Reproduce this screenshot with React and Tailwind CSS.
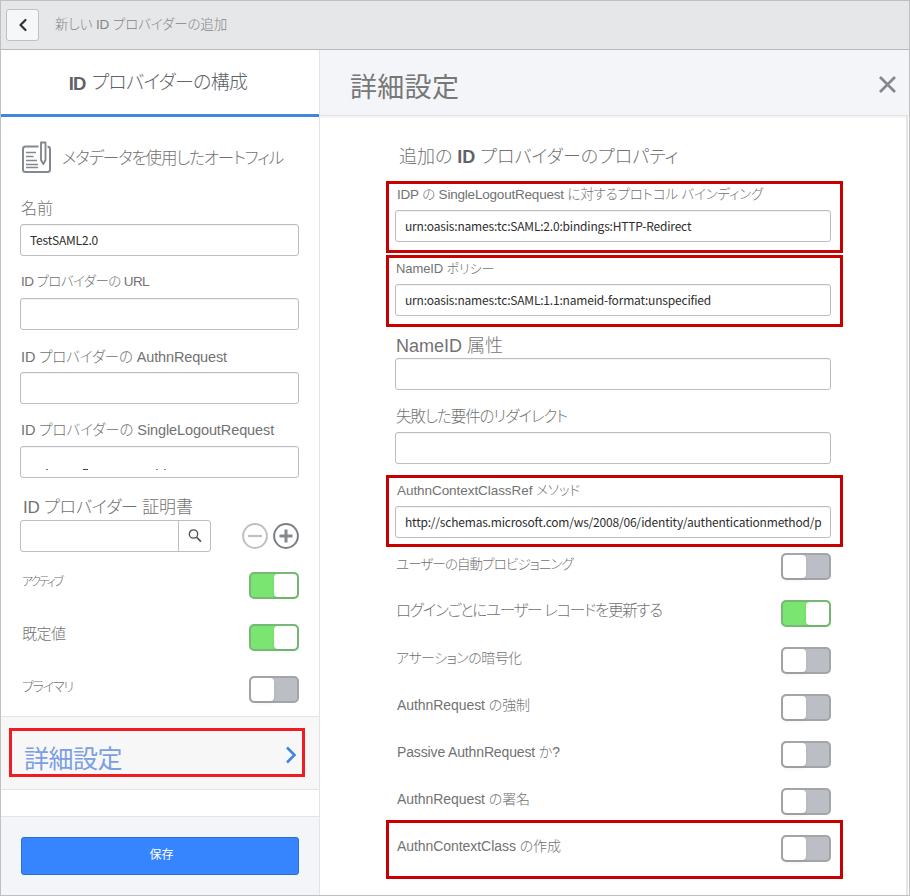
import { ChevronLeft } from "lucide-react";

const inputText = "font-['Noto_Sans_CJK_JP',sans-serif] font-normal text-[#2e2e2e]";

function Label({ className = "", children }) {
  return (
    <div className={`h-5 whitespace-nowrap leading-[22px] text-[#727272] ${className}`}>{children}</div>
  );
}

function Field({ value = "", className = "", children }) {
  return (
    <div
      className={`flex h-8 shrink-0 items-center overflow-hidden whitespace-nowrap rounded-[3px] border border-[#bcbdc0] bg-white px-[9px] shadow-[inset_0_1px_1px_rgba(0,0,0,0.05)] ${inputText} ${className}`}
    >
      {value}
      {children}
    </div>
  );
}

function Toggle({ on = false }) {
  return (
    <div
      className={`flex h-[27px] w-[50px] shrink-0 rounded-[5px] border-2 ${
        on ? "justify-end border-[#76b974] bg-[#7be571]" : "justify-start border-[#a3a5a8] bg-[#bbbec4]"
      }`}
    >
      <div className="h-full w-[23px] rounded-[4px] bg-white shadow-[0_3px_4px_rgba(0,0,0,0.05)]" />
    </div>
  );
}

function DocumentIcon() {
  return (
    <svg width="30" height="34" viewBox="0 0 30 34" fill="none" stroke="#85888e" strokeWidth="2" className="shrink-0">
      <path d="M17.500 6.500H4.500Q2 6.500 2 9V29.500Q2 32 4.500 32H26.500Q29 32 29 29.500V9Q29 7 26.500 6.600" />
      <path d="M5 12.500H15M5 16.500H12.500M5 20.500H16M5 24.500H17M5 27.500H17" strokeWidth="1.700" />
      <path d="M20 2.500H24.500V20L22.300 24L20 20Z" strokeWidth="1.900" strokeLinejoin="round" />
    </svg>
  );
}

function SearchIcon() {
  return (
    <svg width="14" height="14" viewBox="0 0 14 14" fill="none" stroke="#4b4e52">
      <circle cx="5.500" cy="5" r="4.200" strokeWidth="1.300" />
      <path d="M8.600 8.200L13 12.600" strokeWidth="1.600" />
    </svg>
  );
}

function RoundIcon({ plus = false }) {
  return (
    <svg width="26" height="26" viewBox="0 0 26 26" fill="none">
      <circle cx="13" cy="13" r="11.900" stroke={plus ? "#7b7e84" : "#bfc0c3"} strokeWidth="2" />
      <path
        d={plus ? "M6.500 13H19.500M13 6.500V19.500" : "M6 13H20"}
        stroke={plus ? "#85888e" : "#bfc0c3"}
        strokeWidth={plus ? 3 : 2.2}
      />
    </svg>
  );
}

function ToggleRow({ label, on, className = "", labelClass = "" }) {
  return (
    <div className={`flex shrink-0 items-start justify-between ${className}`}>
      <Label className={labelClass}>{label}</Label>
      <Toggle on={on} />
    </div>
  );
}

function Sidebar() {
  return (
    <aside className="flex w-[318px] shrink-0 flex-col bg-white">
      <div className="flex h-[67px] shrink-0 items-center justify-center gap-[6px] whitespace-nowrap border-b-[3px] border-[#4285e0] pr-1 pt-[3px] text-[19px] text-[#5f6368]">
        <span className="text-[18.5px] font-bold tracking-[-0.8px]">ID</span>
        <span className="tracking-[-0.75px]">プロバイダーの構成</span>
      </div>

      <div className="flex h-[75px] shrink-0 items-center gap-[11px] pl-5 pt-[4px]">
        <DocumentIcon />
        <Label className="text-[16.5px] tracking-[-1.1px]">メタデータを使用したオートフィル</Label>
      </div>

      <div className="flex shrink-0 flex-col pl-[19px] pr-5">
        <div className="h-8 pl-px pt-[6px]">
          <Label className="text-[16px]">名前</Label>
        </div>
        <Field value="TestSAML2.0" className="text-[12px] tracking-[-0.2px]" />
        <div className="h-[42px] pl-px pt-[15px]">
          <Label className="text-[13.5px] tracking-[-0.6px]">ID プロバイダーの URL</Label>
        </div>
        <Field />
        <div className="h-[42px] pl-px pt-4">
          <Label className="text-[14.5px] tracking-[-0.15px]">ID プロバイダーの AuthnRequest</Label>
        </div>
        <Field />
        <div className="h-[42px] pl-px pt-[15px]">
          <Label className="text-[14.5px] tracking-[-0.1px]">ID プロバイダーの SingleLogoutRequest</Label>
        </div>
        <Field>
          <div className="mt-[15px] flex h-px pl-4">
            <i className="h-px w-[2px] bg-[#777]" />
            <i className="ml-[35px] h-px w-[5px] bg-[#444]" />
            <i className="ml-[68px] h-px w-[2px] bg-[#888]" />
            <i className="ml-[6px] h-px w-[2px] bg-[#888]" />
          </div>
        </Field>
        <div className="h-[42px] pl-[3px] pt-[19px]">
          <Label className="text-[17px] tracking-[-0.2px]">ID プロバイダー 証明書</Label>
        </div>
        <div className="flex h-8 items-center justify-between">
          <div className="flex h-8 w-[191px] rounded-[3px] border border-[#bcbdc0]">
            <div className="flex-1" />
            <div className="flex w-8 items-center justify-center border-l border-[#bcbdc0]">
              <SearchIcon />
            </div>
          </div>
          <div className="flex gap-[5px]">
            <RoundIcon />
            <RoundIcon plus />
          </div>
        </div>
      </div>

      <div className="flex h-[164px] shrink-0 flex-col pl-[21px] pr-5 pt-5">
        <ToggleRow label="アクティブ" on className="h-[52px]" labelClass="-mt-px text-[12px] tracking-[-2.3px]" />
        <ToggleRow label="既定値" on className="h-[52px]" labelClass="-mt-px text-[15px] tracking-[-0.5px]" />
        <ToggleRow label="プライマリ" className="h-[27px]" labelClass="text-[13px] tracking-[-1.2px]" />
      </div>

      <div className="h-[74px] shrink-0 border-y border-[#e4e4e4] bg-[#f7f7f7] pl-2 pt-[11px]">
        <div className="flex h-[49px] w-[296px] items-center justify-between border-[3px] border-[#f01c24] pl-3 pr-[5px] pt-[6px] text-[25px] font-normal leading-none tracking-[-0.5px] text-[#7b9fe2]">
          <span className="pt-2">詳細設定</span>
          <svg width="12" height="18" viewBox="0 0 12 18" fill="none" className="mb-px">
            <path d="M2 1.500L9.500 9L2 16.500" stroke="#4285e0" strokeWidth="2.600" />
          </svg>
        </div>
      </div>
      <div className="h-[26px] shrink-0 bg-white" />
      <div className="flex-1 border-t border-[#e4e4e4] bg-[#f4f5f8] pl-5 pr-5 pt-5">
        <div className="flex h-[38px] items-center justify-center rounded-[3px] border border-[#2a6fd6] bg-[#3784ff] pb-[2px] pl-[3px] text-[12px] font-normal text-white">
          保存
        </div>
      </div>
    </aside>
  );
}

function Details() {
  return (
    <section className="flex min-w-0 flex-1 flex-col border-l border-[#e2e3e5] bg-white">
      <header className="flex h-[66px] shrink-0 items-center justify-between border-b border-[#e4e5e7] bg-[#f4f5f8] pl-[30px] pr-3">
        <h1 className="pt-[12px] text-[27px] font-normal leading-none tracking-[0.3px] text-[#777777]">詳細設定</h1>
        <svg width="19" height="19" viewBox="0 0 19 19" fill="none" className="mt-1">
          <path d="M2 2L17 17M17 2L2 17" stroke="#85888e" strokeWidth="2.800" />
        </svg>
      </header>

      <div className="mr-px flex flex-1 flex-col border-r-2 border-[#e6e6e7] pl-[66px] shadow-[inset_0_3px_3px_-2px_rgba(0,0,0,0.08)]">
        <div className="h-[65px] pl-[13px] pt-[30px]">
          <Label className="text-[18px]">
            追加の <span className="font-bold text-[#5f6368]">ID</span> プロバイダーのプロパティ
          </Label>
        </div>

        <div className="mb-[2px] h-[72px] w-[457px] shrink-0 border-[3px] border-[#c90000] pl-[6px] pr-[9px]">
          <div className="h-[26px] pl-[2px]">
            <Label className="text-[13.5px] tracking-[-0.2px]">
              IDP の SingleLogoutRequest に対するプロトコル バインディング
            </Label>
          </div>
          <Field
            value="urn:oasis:names:tc:SAML:2.0:bindings:HTTP-Redirect"
            className="text-[12px] tracking-[-0.19px]"
          />
        </div>

        <div className="h-[72px] w-[457px] shrink-0 border-[3px] border-[#c90000] pl-[6px] pr-[9px]">
          <div className="h-[26px] pl-px">
            <Label className="text-[13px] tracking-[-0.1px]">NameID ポリシー</Label>
          </div>
          <Field
            value="urn:oasis:names:tc:SAML:1.1:nameid-format:unspecified"
            className="text-[12px] tracking-[-0.19px]"
          />
        </div>

        <div className="flex w-[445px] shrink-0 flex-col pl-[9px]">
          <div className="h-[31px] pl-px pt-2">
            <Label className="text-[18px]">NameID 属性</Label>
          </div>
          <Field />
          <div className="h-[42px] pl-px pt-4">
            <Label className="text-[15.5px] tracking-[-1.05px]">失敗した要件のリダイレクト</Label>
          </div>
          <Field />
        </div>

        <div className="mt-[11px] h-[72px] w-[457px] shrink-0 border-[3px] border-[#c90000] pl-[6px] pr-[9px]">
          <div className="h-[28px] pl-[2px] pt-[2px]">
            <Label className="text-[13.5px] tracking-[-0.06px]">AuthnContextClassRef メソッド</Label>
          </div>
          <Field
            value="http://schemas.microsoft.com/ws/2008/06/identity/authenticationmethod/p"
            className="text-[12px] tracking-[-0.2px]"
          />
        </div>

        <div className="flex w-[445px] shrink-0 flex-col pl-[10px] pt-[6px]">
          <ToggleRow label="ユーザーの自動プロビジョニング" className="h-[47px]" labelClass="pt-px text-[13.5px] tracking-[-0.9px]" />
          <ToggleRow label="ログインごとにユーザー レコードを更新する" on className="h-[47px]" labelClass="text-[15.5px] tracking-[-1.27px]" />
          <ToggleRow label="アサーションの暗号化" className="h-[47px]" labelClass="text-[14px] tracking-[-0.55px]" />
          <ToggleRow label="AuthnRequest の強制" className="h-[47px]" labelClass="pl-px text-[14px] tracking-[-0.07px]" />
          <ToggleRow label="Passive AuthnRequest か?" className="h-[47px]" labelClass="pl-px text-[14px] tracking-[-0.14px]" />
          <ToggleRow label="AuthnRequest の署名" className="h-[32px]" labelClass="pl-px text-[14px] tracking-[-0.07px]" />
        </div>

        <div className="h-[59px] w-[457px] shrink-0 border-[3px] border-[#c90000] pl-2 pr-[9px] pt-3">
          <ToggleRow label="AuthnContextClass の作成" labelClass="text-[14px] tracking-[-0.06px]" />
        </div>
      </div>
    </section>
  );
}

export default function App() {
  return (
    <div className="flex h-[896px] w-[910px] flex-col overflow-hidden border border-[#bfc0c2] bg-white font-['Liberation_Sans','Noto_Sans_CJK_JP',sans-serif] font-light [font-feature-settings:'palt']">
      <div className="flex h-[49px] shrink-0 items-center gap-4 border-b border-[#b9babc] bg-[#e6e7e9] pl-[5px]">
        <div className="flex h-8 w-[33px] items-center justify-center rounded-[3px] border border-[#bfc0c3] bg-[#f6f7f9]">
          <ChevronLeft size={20} strokeWidth={2.6} className="text-[#2f3338]" />
        </div>
        <div className="whitespace-nowrap text-[13.5px] tracking-[-0.12px] text-[#85868a]">
          新しい ID プロバイダーの追加
        </div>
      </div>
      <div className="flex min-h-0 flex-1">
        <Sidebar />
        <Details />
      </div>
    </div>
  );
}
